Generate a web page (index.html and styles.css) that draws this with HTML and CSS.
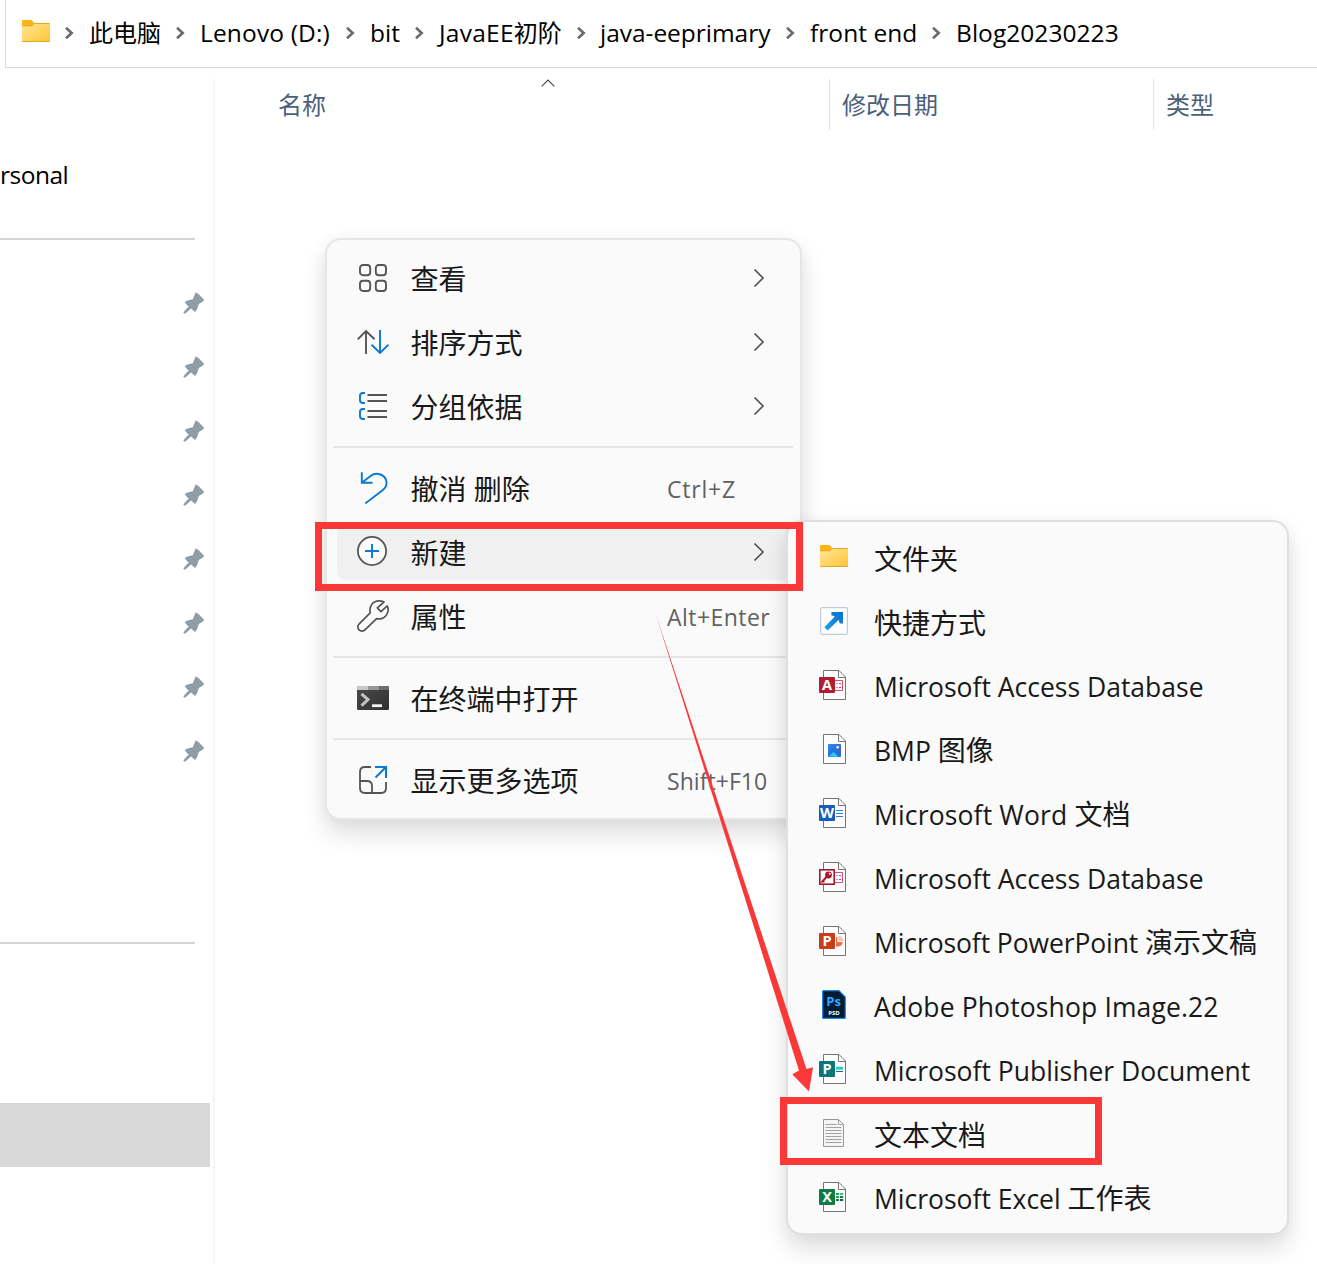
FILE: index.html
```html
<!DOCTYPE html>
<html lang="zh-CN">
<head>
<meta charset="utf-8">
<title>Blog20230223</title>
<link rel="stylesheet" href="styles.css">
</head>
<body>
<svg class="defs" width="0" height="0">
  <defs>
    <linearGradient id="folderFill" x1="0" y1="0" x2="1" y2="1"><stop offset="0" stop-color="#ffe69a"/><stop offset="1" stop-color="#ffc533"/></linearGradient>
    <linearGradient id="arrowFill" x1="0" y1="1" x2="1" y2="0"><stop offset="0" stop-color="#1aa0ea"/><stop offset="1" stop-color="#0a6fd0"/></linearGradient>
    <linearGradient id="termFill" x1="0" y1="0" x2="1" y2="1"><stop offset="0" stop-color="#4a4a4a"/><stop offset="1" stop-color="#303030"/></linearGradient>
    <linearGradient id="photoFill" x1="0" y1="0" x2="1" y2="1"><stop offset="0" stop-color="#2a8df0"/><stop offset="1" stop-color="#3f4fc4"/></linearGradient>
  </defs>
  <symbol id="folder" viewBox="0 0 30 32">
    <path d="M1 4.8Q1 4 2 4H9.5Q10.6 4 11.3 4.8L13.2 7V12H1Z" fill="#fbb414"/>
    <path d="M1 10H9.5Q11 10 11.8 9L13.5 7H28Q29 7 29 8V25Q29 26 28 26H2Q1 26 1 25Z" fill="url(#folderFill)"/>
    <path d="M13.4 7.5H28.6M1.3 25.5H28.7M1.3 9.8H9.7Q11 9.8 11.8 9L13.4 7.5" fill="none" stroke="#e5a928"/>
  </symbol>
  <symbol id="sheet" viewBox="0 0 30 32">
    <path d="M4.5 1.5H20L26.5 8V30.5H4.5Z" fill="#fdfdfd" stroke="#757575"/>
    <path d="M19.5 1.5V8.5H26.5" fill="none" stroke="#757575"/>
  </symbol>
  <symbol id="chevron" viewBox="0 0 12 20"><path d="M1.5 1.5L10 10L1.5 18.5" fill="none" stroke="#555" stroke-width="1.7"/></symbol>
  <symbol id="crumbchev" viewBox="0 0 9 14"><path d="M1 1.8L6.7 7L1 12.2" fill="none" stroke="#6b6b6b" stroke-width="2.6"/></symbol>
  <symbol id="pin" viewBox="0 0 22 22"><path d="M12.5 .8Q13.6 .4 14.6 1.2L20.4 7Q21.3 8.2 20.6 9L15.6 12.3Q15 16 12.8 19.6Q12 20 11.4 19.4L8 16.6L2.4 21.4Q.6 22 .4 20.2L5.6 14.5L2.1 10.8Q1.7 10 2.4 9.4Q6 7.6 9.6 7.4Z" fill="#919da4"/></symbol>
</svg>

<header class="address">
  <svg class="address-icon" width="30" height="32"><use href="#folder"/></svg>
  <nav class="crumbs">
    <div class="crumb"><svg width="9" height="14"><use href="#crumbchev"/></svg><span>此电脑</span></div>
    <div class="crumb drive"><svg width="9" height="14"><use href="#crumbchev"/></svg><span class="la">Lenovo (D:)</span></div>
    <div class="crumb"><svg width="9" height="14"><use href="#crumbchev"/></svg><span class="la">bit</span></div>
    <div class="crumb course"><svg width="9" height="14"><use href="#crumbchev"/></svg><span><span class="la">JavaEE</span>初阶</span></div>
    <div class="crumb repo"><svg width="9" height="14"><use href="#crumbchev"/></svg><span class="la">java-eeprimary</span></div>
    <div class="crumb"><svg width="9" height="14"><use href="#crumbchev"/></svg><span class="la">front end</span></div>
    <div class="crumb"><svg width="9" height="14"><use href="#crumbchev"/></svg><span class="la">Blog20230223</span></div>
  </nav>
</header>

<div class="explorer">
  <aside class="sidebar">
    <div class="side-row side-name">rsonal</div>
    <div class="side-line"></div>
    <div class="pins">
      <svg><use href="#pin"/></svg><svg><use href="#pin"/></svg><svg><use href="#pin"/></svg><svg><use href="#pin"/></svg>
      <svg><use href="#pin"/></svg><svg><use href="#pin"/></svg><svg><use href="#pin"/></svg><svg><use href="#pin"/></svg>
    </div>
    <div class="side-line"></div>
    <div class="side-selected"></div>
  </aside>
  <main class="files">
    <div class="columns">
      <div class="col col-name">名称<svg class="sort" width="14" height="8" viewBox="0 0 14 8"><path d="M.7 7.3L7 1L13.3 7.3" fill="none" stroke="#444" stroke-width="1.1"/></svg></div>
      <div class="col">修改日期</div>
      <div class="col">类型</div>
    </div>
  </main>
</div>

<div class="menu context">
  <div class="item">
    <svg class="ico" viewBox="0 0 32 32"><g fill="none" stroke="#555" stroke-width="1.9"><rect x="3" y="3" width="10.2" height="10.2" rx="3"/><rect x="18.8" y="3" width="10.2" height="10.2" rx="3"/><rect x="3" y="18.8" width="10.2" height="10.2" rx="3"/><rect x="18.8" y="18.8" width="10.2" height="10.2" rx="3"/></g></svg>
    <span>查看</span><svg class="more"><use href="#chevron"/></svg>
  </div>
  <div class="item">
    <svg class="ico" viewBox="0 0 32 32"><g fill="none" stroke-width="1.9"><path d="M9 28V5M.7 13.3L9 5L17.6 13.3" stroke="#555"/><path d="M23 4V27M14.5 18.7L23 27L31.5 18.7" stroke="#0a78d4"/></g></svg>
    <span>排序方式</span><svg class="more"><use href="#chevron"/></svg>
  </div>
  <div class="item">
    <svg class="ico" viewBox="0 0 32 32"><g fill="none" stroke-width="1.9"><path d="M8 3H6Q3 3 3 6V10Q3 13 6 13H8M8 19H6Q3 19 3 22V26Q3 29 6 29H8" stroke="#0a78d4"/><path d="M10.5 5H30M10.5 11H30M10.5 21H30M10.5 27H30" stroke="#555"/></g></svg>
    <span>分组依据</span><svg class="more"><use href="#chevron"/></svg>
  </div>
  <hr>
  <div class="item">
    <svg class="ico" viewBox="0 0 32 32"><path d="M4.8 .3V10.8H15.5M4.8 10.8L13.6 4C19 -.2 29.4 1.8 29.5 11.2C29.5 14 28.2 16.2 25.6 18.2L8.3 31.4" fill="none" stroke="#0a78d4" stroke-width="1.9"/></svg>
    <span>撤消 删除</span><kbd class="wide">Ctrl+Z</kbd>
  </div>
  <div class="item active">
    <svg class="ico" viewBox="0 0 32 32"><circle cx="15" cy="15" r="14.1" fill="#fafafa" stroke="#555" stroke-width="1.8"/><path d="M15 8V22M8 15H22" stroke="#0a78d4" stroke-width="1.9"/></svg>
    <span>新建</span><svg class="more"><use href="#chevron"/></svg>
  </div>
  <div class="item">
    <svg class="ico" viewBox="0 0 32 32"><path d="M13.2 12.8C11.8 6 16.2 .9 22 .9C24 .9 25.6 1.3 27 2L20.3 7.8L24 11.7L30.2 5.8C31.2 7.6 31.5 9.8 30.7 12.4C29.4 17.4 24.8 19.8 19.6 18.6L8.2 29.7C6.4 31.6 3.7 31.5 2.1 29.9C.4 28.2 .4 25.6 2.2 23.9Z" fill="none" stroke="#555" stroke-width="1.7" stroke-linejoin="round"/></svg>
    <span>属性</span><kbd>Alt+Enter</kbd>
  </div>
  <hr>
  <div class="item">
    <svg class="ico" viewBox="0 0 32 32"><rect y="4" width="32" height="24" rx="1.5" fill="url(#termFill)"/><path d="M0 8V5.5Q0 4 1.5 4H11V8Z" fill="#c9c9c9"/><path d="M11 4H22V8H11Z" fill="#969696"/><path d="M22 4H30.5Q32 4 32 5.5V8H22Z" fill="#6d6d6d"/><path d="M4.5 11.8L11 17.6L4.5 23.6" fill="none" stroke="#c4c4c4" stroke-width="3"/><path d="M15 23.7H25" stroke="#f4f4f4" stroke-width="2.8"/></svg>
    <span>在终端中打开</span>
  </div>
  <hr>
  <div class="item">
    <svg class="ico" viewBox="0 0 32 32"><g fill="none" stroke-width="1.8"><path d="M14 3H8Q3 3 3 8V24Q3 29 8 29H24Q29 29 29 24V18M3 17H10Q15 17 15 22V29" stroke="#555"/><path d="M18 3H29V14M29 3L18.5 13.5" stroke="#0a78d4" stroke-width="2"/></g></svg>
    <span>显示更多选项</span><kbd class="narrow">Shift+F10</kbd>
  </div>
</div>

<div class="menu submenu">
  <div class="item"><svg class="ico"><use href="#folder"/></svg><span>文件夹</span></div>
  <div class="item"><svg class="ico" viewBox="0 0 30 32"><rect x="1.6" y="2.6" width="26.8" height="26.8" rx="1.5" fill="#fdfeff" stroke="#c3cad9" stroke-width="1.3"/><path d="M12.4 7H24V18.6H20.8L19.6 15L8.6 25.4L5.4 22.2L15.9 11.4L12.4 10.2Z" fill="url(#arrowFill)"/></svg><span>快捷方式</span></div>
  <div class="item"><svg class="ico" viewBox="0 0 30 32"><use href="#sheet"/><path d="M15 11.5H23.5V21.5H15M17.5 14.5H18.7M20 14.5H22M17.5 18.5H18.7M20 18.5H22" fill="none" stroke="#d64d65"/><rect y="8" width="16" height="16" rx="1" fill="#b01e33"/><text x="8" y="21" class="badge">A</text></svg><span class="la">Microsoft Access Database</span></div>
  <div class="item mixed"><svg class="ico" viewBox="0 0 30 32"><use href="#sheet"/><rect x="9" y="11" width="13" height="13" rx="1" fill="url(#photoFill)"/><path d="M9 20.5L14.5 15L22 22.5V23Q22 24 21 24H10Q9 24 9 23Z" fill="#1b78dc"/><path d="M9.6 23.8L14.5 19L19.5 23.8Z" fill="#38c4f2"/><circle cx="18.7" cy="14.3" r="1.3" fill="#fff"/></svg><span><span class="la">BMP </span>图像</span></div>
  <div class="item mixed word"><svg class="ico" viewBox="0 0 30 32"><use href="#sheet"/><path d="M17 13.5H24M17 16.5H24M17 19.5H24" stroke="#2b7cd3"/><rect y="8" width="16" height="16" rx="1" fill="#185abd"/><text x="8" y="20.6" class="badge">W</text></svg><span><span class="la">Microsoft Word </span>文档</span></div>
  <div class="item"><svg class="ico" viewBox="0 0 30 32"><use href="#sheet"/><path d="M15 11.5H23.5V21.5H15M17.5 14.5H18.7M20 14.5H22M17.5 18.5H18.7M20 18.5H22" fill="none" stroke="#d64d80"/><rect x=".8" y="8.8" width="14.4" height="14.4" fill="#fff" stroke="#a4162c" stroke-width="1.6"/><circle cx="9.5" cy="14" r="3.4" fill="#a4162c"/><circle cx="10.7" cy="12.8" r="1" fill="#fff"/><path d="M8 15.5L3.3 20.6H5.5" fill="none" stroke="#a4162c" stroke-width="1.9"/></svg><span class="la">Microsoft Access Database</span></div>
  <div class="item mixed ppt"><svg class="ico" viewBox="0 0 30 32"><use href="#sheet"/><path d="M19.5 11A5 5 0 0 1 24.5 16H19.5Z" fill="#ffc0aa"/><path d="M17 12V21.5H18A5.5 5.5 0 0 0 23.8 17H18.3V12Z" fill="#ed6c47"/><rect y="8" width="16" height="16" rx="1" fill="#c43e1c"/><text x="8" y="21" class="badge">P</text></svg><span><span class="la">Microsoft PowerPoint </span>演示文稿</span></div>
  <div class="item psd-row"><svg class="ico" viewBox="0 0 30 32"><path d="M4.5 1.6H20L26.3 8V28.5Q26.3 29.4 25.4 29.4H4.5Q3.6 29.4 3.6 28.5V2.5Q3.6 1.6 4.5 1.6Z" fill="#001d34" stroke="#1f87e5" stroke-width="1.2"/><text x="14.6" y="16.6" class="ps">Ps</text><text x="15" y="26" class="psd">PSD</text></svg><span class="la">Adobe Photoshop Image.22</span></div>
  <div class="item"><svg class="ico" viewBox="0 0 30 32"><use href="#sheet"/><path d="M17 15.2H24" stroke="#37c6d0" stroke-width="3"/><path d="M17 18.5H24" stroke="#07757c"/><rect y="8" width="16" height="16" rx="1" fill="#08767b"/><text x="8" y="21" class="badge">P</text></svg><span class="la">Microsoft Publisher Document</span></div>
  <div class="item"><svg class="ico" viewBox="0 0 30 32"><path d="M4.5 2.5H19.5L24.5 7.5V29.5H4.5Z" fill="#f4f5f6" stroke="#979797"/><path d="M19.5 2.5V7.5H24.5M6.5 7.5H18M6.5 10.5H22.5M6.5 13.5H22.5M6.5 16.5H22.5M6.5 19.5H22.5M6.5 22.5H22.5M6.5 25.5H22.5" fill="none" stroke="#a3a3a3"/></svg><span>文本文档</span></div>
  <div class="item mixed"><svg class="ico" viewBox="0 0 30 32"><use href="#sheet"/><path d="M17 13H20M17 16H20" stroke="#21a366" stroke-width="2"/><path d="M21 13H24.2" stroke="#33c481" stroke-width="2"/><path d="M21 16H24.2M17 19H20" stroke="#107c41" stroke-width="2"/><path d="M21 19H24.2" stroke="#185c37" stroke-width="2"/><rect y="8" width="16" height="16" rx="1" fill="#107c41"/><text x="8" y="21" class="badge">X</text></svg><span><span class="la">Microsoft Excel </span>工作表</span></div>
</div>

<div class="mark mark-new"></div>
<div class="mark mark-text"></div>
<svg class="pointer" width="170" height="490" viewBox="650 605 170 490"><path d="M655 612L806.5 1069L813 1067.3L809 1091.5L792.3 1074.3L799 1070.5Z" fill="#fb3838"/></svg>
</body>
</html>
```
FILE: styles.css
```css
* { box-sizing: border-box; }

body {
  margin: 0;
  width: 1317px;
  height: 1264px;
  position: relative;
  overflow: hidden;
  display: flex;
  flex-direction: column;
  background: #fff;
  color: #000;
  font-family: "Open Sans", "Noto Sans CJK SC", sans-serif;
  font-size: 24px;
}

svg { display: block; flex: none; }
.defs { position: absolute; }

/* Address bar */
.address {
  flex: none;
  display: flex;
  height: 68px;
  margin-left: 5px;
  padding-left: 15px;
  border-left: 1px solid #d9d9d9;
  border-bottom: 1px solid #d9d9d9;
}
.address-icon { margin-top: 16px; }
.crumbs {
  display: grid;
  grid-template-columns: 111px 170px 69px 162px 209px 146px 200px;
  height: 66px;
  margin-left: 14px;
}
.crumb {
  display: flex;
  align-items: center;
  gap: 15px;
  line-height: 66px;
  white-space: nowrap;
}
.crumb .la { font-size: 24.5px; letter-spacing: .05px; }
.drive .la { letter-spacing: .15px; }
.course .la { letter-spacing: .25px; }
.repo { gap: 14px; }
.repo .la { letter-spacing: -.03px; }

/* Panes */
.explorer { flex: 1; display: flex; }
.sidebar { width: 213px; padding-top: 75px; }
.side-row { height: 64px; line-height: 64px; }
.side-name { font-size: 24.5px; letter-spacing: -.5px; }
.side-line { width: 195px; height: 2px; background: #d4d4d4; margin-top: 31px; }
.pins { display: flex; flex-direction: column; gap: 42px; padding: 52px 0 0 183px; }
.pins svg { width: 22px; height: 22px; }
.pins + .side-line { margin-top: 180px; }
.side-selected { width: 210px; height: 64px; margin-top: 159px; background: #d9d9d9; }
.files { flex: 1; margin-top: 11px; border-left: 2px solid #f5f5f5; }
.columns { display: grid; grid-template-columns: 614px 324px 1fr; height: 51px; }
.col {
  position: relative;
  height: 51px;
  padding-left: 12px;
  line-height: 52px;
  color: #4c607a;
  border-left: 1px solid #e2e2e2;
}
.col-name { border-left: 0; padding-left: 63px; }
.sort { position: absolute; left: 326px; top: 0; }

/* Menus */
.menu {
  position: absolute;
  border: 2px solid #e6e6e6;
  border-radius: 16px;
  background: #fafafa;
  background-clip: padding-box;
  color: #191919;
  font-size: 28px;
  box-shadow: 0 14px 24px rgba(0, 0, 0, .13), 0 0 16px rgba(0, 0, 0, .04);
}
.context { left: 325px; top: 238px; width: 477px; height: 582px; padding: 7px 7px 5px 6px; }
.submenu { left: 786px; top: 520px; width: 503px; height: 715px; padding: 5px 0 0; border-color: #dfdfdf; }
.item {
  position: relative;
  display: flex;
  height: 64px;
  line-height: 64px;
  white-space: nowrap;
}
.context .item { padding-left: 24px; }
.context .ico { width: 32px; height: 32px; margin: 15px 21.5px 0 0; }
.submenu .item { padding-left: 31px; }
.submenu .ico { width: 30px; height: 32px; margin: 14px 25px 0 0; }
.item > span, .item > kbd { position: relative; }
.item .la { font-size: 26.5px; }
.mixed { line-height: 63px; }
.word .la { letter-spacing: .15px; }
.ppt .la { letter-spacing: -.1px; }
.psd-row .la { letter-spacing: .13px; }
.more { position: absolute; left: 419.5px; top: 21px; width: 12px; height: 20px; }
.item > kbd {
  position: absolute;
  left: 334px;
  font: 23px/65px "Open Sans", sans-serif;
  letter-spacing: .45px;
  color: #616161;
}
.item > kbd.wide { letter-spacing: .8px; }
.item > kbd.narrow { letter-spacing: .05px; }
.active::before {
  content: "";
  position: absolute;
  left: 4px;
  right: 3px;
  top: 3px;
  height: 56px;
  border-radius: 8px;
  background: #f0f0f0;
}
.active > .ico { position: relative; }
.menu hr { height: 2px; margin: 7px 0 9px; border: 0; background: #e6e6e6; }

.badge { font: 700 14.5px "Open Sans", sans-serif; fill: #fff; text-anchor: middle; }
.ps { font: 700 13px "Open Sans", sans-serif; fill: #31a8ff; text-anchor: middle; }
.psd { font: 700 6px "Open Sans", sans-serif; fill: #fff; text-anchor: middle; }

/* Annotations */
.mark { position: absolute; border: 7px solid #fb3838; }
.mark-new { left: 315px; top: 522px; width: 488px; height: 69px; }
.mark-text { left: 780px; top: 1097px; width: 322px; height: 68px; }
.pointer { position: absolute; left: 650px; top: 605px; }
```
